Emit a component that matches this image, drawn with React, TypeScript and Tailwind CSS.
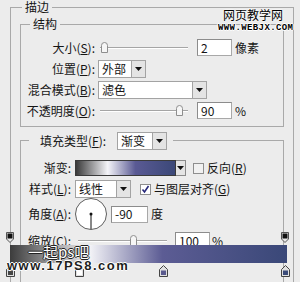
import React from 'react';

const U = ({ c }: { c: string }) => <span className="underline underline-offset-[1px]">{c}</span>;

function Arrow() {
  return (
    <svg width="7" height="4" viewBox="0 0 7 4">
      <path d="M0 0H7L3.5 4Z" fill="#111" />
    </svg>
  );
}

function Row({ label, labelW, h, className = '', children }: { label: React.ReactNode; labelW: string; h: string; className?: string; children?: React.ReactNode }) {
  return (
    <div className={`flex items-center ${h} ${className}`}>
      <div className={`${labelW} text-right whitespace-nowrap`}>{label}</div>
      {children}
    </div>
  );
}

function Select({ text, box, className = '' }: { text: string; box: string; className?: string }) {
  return (
    <div className={`flex h-[18px] ${className}`}>
      <div className={`${box} flex items-center bg-white border border-[#a3a3a3] pl-[3px]`}>{text}</div>
      <div className="w-[14px] flex items-center justify-center bg-[#e4e4e4] border border-l-0 border-[#a3a3a3]">
        <Arrow />
      </div>
    </div>
  );
}

function Input({ v, w, className = '' }: { v: string; w: string; className?: string }) {
  return (
    <div className={`${w} h-[17px] flex items-center bg-white border border-[#a8a8a8] border-t-[#8c8c8c] border-l-[#8c8c8c] pl-[3px] ${className}`}>
      {v}
    </div>
  );
}

function Thumb() {
  return (
    <svg width="7" height="11" viewBox="0 0 7 11">
      <path d="M0.5 3.5Q0.5 0.5 3.5 0.5Q6.5 0.5 6.5 3.5V10.5H0.5Z" fill="#f6f6f6" stroke="#8e8e8e" />
    </svg>
  );
}

function Slider({ w, thumb, className = '' }: { w: string; thumb: string; className?: string }) {
  return (
    <div className={`relative ${w} h-[12px] ${className}`}>
      <div className="absolute left-0 right-0 top-[5px] h-px bg-[#a5a5a5] shadow-[0_1px_0_#fff]" />
      <div className={`absolute top-0 ${thumb}`}>
        <Thumb />
      </div>
    </div>
  );
}

function Check({ on = false, className = '' }: { on?: boolean; className?: string }) {
  return (
    <div className={`w-[11px] h-[11px] border border-[#8e8e8e] flex items-center justify-center ${on ? 'bg-white' : 'bg-[#f1f1f1]'} ${className}`}>
      {on && (
        <svg width="9" height="9" viewBox="0 0 9 9">
          <path d="M1.5 4.5L3.5 7L7.5 1" fill="none" stroke="#27287a" strokeWidth="1.6" />
        </svg>
      )}
    </div>
  );
}

function TopStop({ className }: { className: string }) {
  return (
    <svg className={`absolute ${className}`} width="8" height="11" viewBox="0 0 8 11">
      <path d="M0.5 0.5H7.5V7L4 10.5L0.5 7Z" fill="#e8e8e8" stroke="#555" />
      <rect x="1.5" y="1.5" width="5" height="5" fill="#111" />
    </svg>
  );
}

function BottomStop({ className, color }: { className: string; color: string }) {
  return (
    <svg className={`absolute ${className}`} width="9" height="12" viewBox="0 0 9 12">
      <path d="M4.5 0.5L8.5 4.5V11.5H0.5V4.5Z" fill="#e0e0e0" stroke="#444" />
      <rect x="2" y="5.5" width="5" height="4.5" fill={color} />
    </svg>
  );
}

export default function App() {
  return (
    <div className="relative w-[300px] h-[282px] overflow-hidden bg-[#ececec] text-[12px] leading-[14px] text-[#151515] font-['Noto_Sans_CJK_SC','Noto_Sans',sans-serif]">
      <fieldset className="ml-[10px] w-[284px] min-h-[330px] border border-[#a9a9a9] px-[9px]">
        <legend className="ml-[2px] px-[3px] h-[14px] leading-[14px]">描边</legend>

        {/* 结构 */}
        <fieldset className="mt-[3px] border border-[#a9a9a9] pt-[6px] pb-[5px]">
          <legend className="ml-[9px] px-[3px] h-[14px] leading-[14px]">结构</legend>
          <Row label={<>大小(<U c="S" />):</>} labelW="w-[74px]" h="h-[21px]">
            <Slider w="w-[88px]" thumb="left-[1px]" className="ml-[5px]" />
            <Input v="2" w="w-[35px]" className="ml-[9px]" />
            <span className="ml-[3px]">像素</span>
          </Row>
          <Row label={<>位置(<U c="P" />):</>} labelW="w-[74px]" h="h-[21px]">
            <Select text="外部" box="w-[34px]" className="ml-[3px]" />
          </Row>
          <Row label={<>混合模式(<U c="B" />):</>} labelW="w-[74px]" h="h-[21px]">
            <Select text="滤色" box="w-[95px]" className="ml-[3px]" />
          </Row>
          <Row label={<>不透明度(<U c="O" />):</>} labelW="w-[74px]" h="h-[21px]">
            <Slider w="w-[88px]" thumb="left-[76px]" className="ml-[5px]" />
            <Input v="90" w="w-[35px]" className="ml-[9px]" />
            <span className="ml-[3px]">%</span>
          </Row>
        </fieldset>

        {/* 填充 */}
        <fieldset className="mt-[5px] border border-[#a9a9a9] pt-[10px] pb-[60px]">
          <legend className="ml-[8px] pl-[11px] pr-[6px] h-[17px] flex items-center">
            <span>填充类型(<U c="F" />):</span>
            <Select text="渐变" box="w-[36px]" className="ml-[11px] h-[17px]" />
          </legend>

          <Row label="渐变:" labelW="w-[50px]" h="h-[18px]">
            <div className="ml-[4px] flex h-[16px]">
              <div className="w-[101px] border border-[#3a3a3a] bg-[linear-gradient(to_right,#3a3a3a_0%,#f4f4f8_32%,#5a5a94_60%,#3b4878_100%)]" />
              <div className="w-[10px] flex items-center justify-center bg-[#e4e4e4] border border-l-0 border-[#8a8a8a]">
                <Arrow />
              </div>
            </div>
            <Check className="ml-[7px]" />
            <span className="ml-[3px]">反向(<U c="R" />)</span>
          </Row>

          <Row label={<>样式(<U c="L" />):</>} labelW="w-[50px]" h="h-[18px]" className="mt-[3px]">
            <Select text="线性" box="w-[42px]" className="ml-[4px]" />
            <Check on className="ml-[9px]" />
            <span className="ml-[3px]">与图层对齐(<U c="G" />)</span>
          </Row>

          <Row label={<>角度(<U c="A" />):</>} labelW="w-[50px]" h="h-[32px]">
            <svg className="ml-[4px]" width="32" height="32" viewBox="0 0 32 32">
              <circle cx="16" cy="16" r="15.5" fill="#fff" stroke="#5e5e5e" />
              <line x1="16" y1="16" x2="16" y2="31" stroke="#111" />
              <circle cx="16" cy="16" r="1.5" fill="#111" />
            </svg>
            <Input v="-90" w="w-[37px]" className="ml-[4px]" />
            <span className="ml-[3px]">度</span>
          </Row>

          <Row label={<>缩放(<U c="C" />):</>} labelW="w-[50px]" h="h-[17px]" className="mt-[2px]">
            <Slider w="w-[89px]" thumb="left-[52px]" className="ml-[7px]" />
            <Input v="100" w="w-[35px]" className="ml-[8px]" />
            <span className="ml-[2px]">%</span>
          </Row>
        </fieldset>
      </fieldset>

      {/* gradient editor strip laid over the dialog */}
      <TopStop className="left-[6px] top-[232px]" />
      <TopStop className="left-[281px] top-[232px]" />
      <div className="absolute left-[10px] top-[245px] w-[277px] h-[18px] bg-[linear-gradient(to_right,#3c3c3c_0%,#f2f2f6_29%,#5c5c94_55%,#3a4878_100%)]" />
      <BottomStop className="left-[6px] top-[265px]" color="#454545" />
      <BottomStop className="left-[75px] top-[265px]" color="#ffffff" />
      <BottomStop className="left-[159px] top-[265px]" color="#5a5a8e" />
      <BottomStop className="left-[281px] top-[265px]" color="#3a4a78" />

      {/* watermarks */}
      <div className="absolute left-[223px] top-[7px] text-[12px] leading-[15px] text-black [text-shadow:0_0_2px_#fff,0_0_2px_#fff]">网页教学网</div>
      <div className="absolute left-[218px] top-[23px] text-[9px] leading-[10px] font-bold tracking-[0.4px] text-black font-['Liberation_Mono',monospace] [text-shadow:1px_0_0_#fff,-1px_0_0_#fff,0_1px_0_#fff,0_-1px_0_#fff]">WWW.WEBJX.COM</div>
      <div className="absolute left-[28px] top-[243px] text-[15px] leading-[17px] text-white [text-shadow:1px_0_0_#222,-1px_0_0_#222,0_1px_0_#222,0_-1px_0_#222]">一起ps吧</div>
      <div className="absolute left-[7px] top-[259px] text-[13px] leading-[13px] font-bold tracking-[1.5px] text-[#1e1e1e] font-['Liberation_Sans',sans-serif] [text-shadow:1px_0_0_#fff,-1px_0_0_#fff,0_1px_0_#fff,0_-1px_0_#fff]">www.17PS8.com</div>
    </div>
  );
}
